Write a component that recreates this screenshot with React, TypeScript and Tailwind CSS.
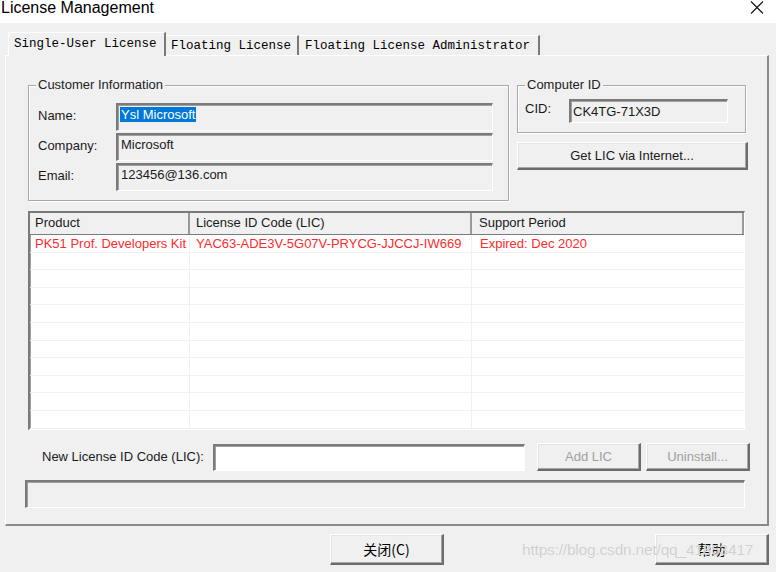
import React from 'react';

const raised =
  'border-t border-l border-t-white border-l-white border-r-2 border-b-2 border-r-[#6b6b6b] border-b-[#6b6b6b] shadow-[inset_-1px_-1px_0_#a8a8a8,inset_1px_1px_0_#e3e3e3]';
const sunken =
  'border-t-2 border-l-2 border-t-[#7a7a7a] border-l-[#7a7a7a] border-b border-r border-b-white border-r-white shadow-[inset_1px_1px_0_#a0a0a0]';

function GroupBox({ title, className, children }: { title: string; className: string; children: React.ReactNode }) {
  return (
    <div className={`relative border border-[#a8a8a8] shadow-[inset_1px_1px_0_#fff,1px_1px_0_#fff] ${className}`}>
      <span className="absolute -top-[9px] left-[7px] bg-[#f0f0f0] px-[2px] leading-[16px] text-[#222]">{title}</span>
      {children}
    </div>
  );
}

function Field({ label, value, selected }: { label: string; value: string; selected?: boolean }) {
  return (
    <div className="flex items-center h-[28px]">
      <span className="w-[87px] pl-[9px] -mt-[2px]">{label}</span>
      <div className={`w-[377px] h-full bg-[#f0f0f0] pl-[2px] pt-[2px] leading-[15px] ${sunken}`}>
        {selected ? <span className="bg-[#0078d7] text-white px-[1px]">{value}</span> : <span className="px-[1px]">{value}</span>}
      </div>
    </div>
  );
}

const rows = [
  { product: 'PK51 Prof. Developers Kit', lic: 'YAC63-ADE3V-5G07V-PRYCG-JJCCJ-IW669', period: 'Expired: Dec 2020' },
  ...Array.from({ length: 10 }, () => ({ product: '', lic: '', period: '' })),
];

export default function App() {
  return (
    <div className="w-[776px] h-[572px] bg-[#f0f0f0] flex flex-col text-[13px] text-[#1a1a1a] overflow-hidden relative" style={{ fontFamily: '"Liberation Sans", Arial, sans-serif' }}>
      {/* title bar */}
      <div className="h-[23px] bg-white flex justify-between items-start">
        <span className="text-[16px] leading-[16px] pl-[1px] text-black">License Management</span>
        <svg width="16" height="16" viewBox="0 0 16 16" className="mr-[11px]">
          <path d="M2 1.5 L14 13.5 M14 1.5 L2 13.5" stroke="#111" strokeWidth="1.1" />
        </svg>
      </div>

      {/* tabs */}
      <div className="flex items-end pl-[8px] pt-[9px] h-[32px] text-[12.5px] text-black" style={{ fontFamily: '"Liberation Mono", "Courier New", monospace' }}>
        <div className="relative z-10 h-[24px] w-[158px] bg-[#f0f0f0] border-t border-l border-white border-r-2 border-r-[#7a7a7a] pl-[5px] pt-[3px] leading-[16px] -mb-[1px]">Single-User License</div>
        <div className="h-[20px] w-[133px] border-t border-white border-r-2 border-r-[#7a7a7a] pl-[5px] pt-[3px] leading-[15px]">Floating License</div>
        <div className="h-[20px] w-[241px] border-t border-white border-r-2 border-r-[#7a7a7a] pl-[6px] pt-[3px] leading-[15px]">Floating License Administrator</div>
      </div>

      {/* tab page */}
      <div className="ml-[5px] w-[764px] h-[471px] border-t border-l border-white border-r-2 border-b-2 border-r-[#8a8a8a] border-b-[#8a8a8a] flex flex-col pl-[22px]">
        <div className="flex gap-[8px] mt-[29px]">
          <GroupBox title="Customer Information" className="w-[481px] h-[116px] pt-[17px] flex flex-col gap-[2px]">
            <Field label="Name:" value="Ysl Microsoft" selected />
            <Field label="Company:" value="Microsoft" />
            <Field label="Email:" value="123456@136.com" />
          </GroupBox>
          <div className="flex flex-col w-[230px]">
            <GroupBox title="Computer ID" className="w-[229px] h-[48px] flex items-center pt-[4px]">
              <span className="pl-[7px] w-[51px] -mt-[5px]">CID:</span>
              <div className={`w-[159px] h-[24px] bg-[#f0f0f0] pl-[2px] pt-[3px] leading-[15px] ${sunken}`}>CK4TG-71X3D</div>
            </GroupBox>
            <button className={`mt-[9px] h-[28px] w-[231px] bg-[#f0f0f0] text-center ${raised}`}>Get LIC via Internet...</button>
          </div>
        </div>

        {/* license list */}
        <div className={`mt-[10px] w-[717px] h-[219px] bg-white overflow-hidden ${sunken}`}>
          <div className="flex h-[22px] bg-[#f0f0f0] border-b border-[#7a7a7a] leading-[16px]">
            <div className="w-[160px] border-r-2 border-[#9a9a9a] pl-[5px] pt-[2px]">Product</div>
            <div className="w-[282px] border-r-2 border-[#9a9a9a] pl-[6px] pt-[2px]">License ID Code (LIC)</div>
            <div className="flex-1 border-r-2 border-[#9a9a9a] pl-[7px] pt-[2px]">Support Period</div>
          </div>
          {rows.map((r, i) => (
            <div key={i} className="flex h-[17.6px] border-b border-[#f0f0f0] text-[#ff2a2a] leading-[17px]">
              <div className="w-[160px] border-r border-[#f0f0f0] pl-[5px] whitespace-nowrap overflow-hidden">{r.product}</div>
              <div className="w-[282px] border-r border-[#f0f0f0] pl-[6px] whitespace-nowrap overflow-hidden">{r.lic}</div>
              <div className="flex-1 pl-[8px] whitespace-nowrap">{r.period}</div>
            </div>
          ))}
        </div>

        {/* new LIC entry */}
        <div className="flex items-center mt-[13px] h-[28px]">
          <span className="pl-[14px] w-[185px] whitespace-nowrap">New License ID Code (LIC):</span>
          <div className={`w-[312px] h-[27px] bg-white ${sunken}`} />
          <button className={`ml-[12px] w-[104px] h-[28px] bg-[#f0f0f0] text-[#a0a0a0] ${raised}`}>Add LIC</button>
          <button className={`ml-[5px] w-[104px] h-[28px] bg-[#f0f0f0] text-[#a0a0a0] ${raised}`}>Uninstall...</button>
        </div>

        {/* status bar */}
        <div className={`mt-[9px] -ml-[3px] w-[720px] h-[28px] bg-[#f0f0f0] ${sunken}`} />
      </div>

      {/* dialog buttons */}
      <div className="flex mt-[8px]" style={{ fontFamily: '"Noto Sans CJK SC", "Liberation Sans", sans-serif' }}>
        <button className={`ml-[330px] w-[114px] h-[31px] bg-[#f0f0f0] text-[14px] text-black ${raised}`}>关闭(C)</button>
        <button className={`ml-[211px] w-[114px] h-[31px] bg-[#f0f0f0] text-[14px] text-black ${raised}`}>帮助</button>
      </div>

      <span className="absolute left-[522px] top-[540px] text-[15.5px] leading-[20px] text-[#cfcfcf] whitespace-nowrap pointer-events-none tracking-[-0.2px]" style={{ textShadow: '0 0 1px #fff' }}>
        https://blog.csdn.net/qq_41853417
      </span>
    </div>
  );
}
